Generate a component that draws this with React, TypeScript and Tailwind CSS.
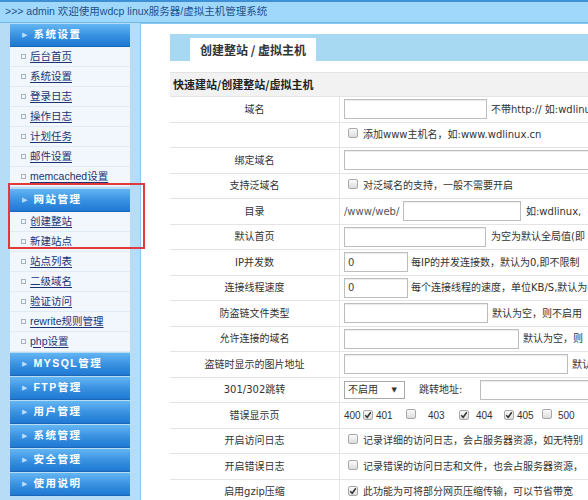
import React from "react";

const cjk = '"Noto Sans CJK SC", sans-serif';
const valFont = { fontFamily: `"DejaVu Sans", ${cjk}` };
const sideFont = { fontFamily: `"Liberation Sans", ${cjk}` };

const Box = ({ checked }: { checked?: boolean }) => (
  <span className="inline-flex shrink-0 items-center justify-center w-[10px] h-[10px] border border-[#a9a9a9] rounded-[2px] bg-gradient-to-b from-[#fbfbfb] to-[#dcdcdc]">
    {checked && (
      <svg width="8" height="8" viewBox="0 0 8 8">
        <path d="M1.2 4.3 L3.2 6.3 L6.8 1.3" stroke="#333" strokeWidth="1.5" fill="none" />
      </svg>
    )}
  </span>
);

const Input = ({ w, v }: { w: string; v?: string }) => (
  <span className={`inline-flex shrink-0 items-center h-[20px] border border-[#bdbdbd] bg-white px-[3px] text-[10px] text-[#444] shadow-[inset_0_1px_1px_rgba(0,0,0,0.08)] ${w}`}>
    {v}
  </span>
);

const SideHead = ({ label }: { label: string }) => (
  <div className="h-[23px] flex items-center bg-gradient-to-b from-[#63b6f2] via-[#3a92e2] to-[#1f78d3] border-b border-[#1a66b8]">
    <span className="ml-[12px] mr-[6px] text-[7px] text-[#b8dcff]">▶</span>
    <span className="text-white font-bold text-[10.5px] tracking-[1.5px]" style={sideFont}>{label}</span>
  </div>
);

const SideItem = ({ label }: { label: string }) => (
  <div className="h-[20px] flex items-center border-b border-[#e1ebf5] bg-[#f1f7fd]">
    <span className="ml-[11px] mr-[4px] w-[5px] h-[5px] border border-[#a5b2c0]" />
    <a className="text-[10.5px] text-[#1b3372] underline underline-offset-2" style={sideFont}>{label}</a>
  </div>
);

const Check = ({ checked, text }: { checked?: boolean; text: string }) => (
  <>
    <span className="ml-[4px] mr-[5px]"><Box checked={checked} /></span>
    <span>{text}</span>
  </>
);

const Code = ({ n, cls }: { n: string; cls?: string }) => (
  <span className={`w-[17px] shrink-0 ${cls ?? ""}`} style={sideFont}>{n}</span>
);

const Row = ({ label, children }: { label: string; children?: React.ReactNode }) => (
  <div className="flex h-[25.5px] border-b border-[#e4e4e4]">
    <div className="w-[170px] shrink-0 flex items-center justify-center border-r border-[#e4e4e4] text-[10px] text-[#333]">{label}</div>
    <div className="flex items-center pl-[4px] text-[10px] text-[#333] whitespace-nowrap">{children}</div>
  </div>
);

export default function App() {
  return (
    <div className="w-[588px] h-[500px] overflow-hidden bg-[#b6dcf6]" style={valFont}>
      <div className="h-[23px] border-t-2 border-[#3f8fd4] border-b border-b-[#6db8e6] bg-[#a0d8fc] flex items-center pl-[5px] text-[10.5px] text-[#21508a]" style={sideFont}>
        &gt;&gt;&gt; admin 欢迎使用wdcp linux服务器/虚拟主机管理系统
      </div>
      <div className="flex h-[477px]">
        <div className="w-[140px] shrink-0 px-[10px] pt-[1px] relative">
          <SideHead label="系统设置" />
          {["后台首页", "系统设置", "登录日志", "操作日志", "计划任务", "邮件设置", "memcached设置"].map((t) => (
            <SideItem key={t} label={t} />
          ))}
          <div className="h-[2px]" />
          <SideHead label="网站管理" />
          {["创建整站", "新建站点", "站点列表", "二级域名", "验证访问", "rewrite规则管理", "php设置"].map((t) => (
            <SideItem key={t} label={t} />
          ))}
          <div className="flex flex-col gap-[1px] mt-[1px]">
            <SideHead label="MYSQL管理" />
            <SideHead label="FTP管理" />
            <SideHead label="用户管理" />
            <SideHead label="系统管理" />
            <SideHead label="安全管理" />
            <SideHead label="使用说明" />
          </div>
          <div className="absolute left-[8px] top-[160px] w-[137px] h-[66px] border-2 border-[#e23a3a]" />
        </div>
        <div className="flex-1 bg-white border-l border-t border-[#8cc8ee] pl-[29px] pt-[10px] overflow-hidden">
          <div className="h-[27px] bg-[#a8d9f3] flex items-end pl-[20px]">
            <div className="h-[23px] w-[126px] bg-white flex items-center justify-center text-[12px] font-bold text-[#333]" style={{ fontFamily: cjk }}>
              创建整站 / 虚拟主机
            </div>
          </div>
          <div className="mt-[11px] border-t border-[#e4e4e4] w-[600px]">
            <div className="h-[24px] bg-[#f2f2f2] border-b border-[#e4e4e4] flex items-center pl-[3px] text-[11px] font-bold text-[#222]" style={{ fontFamily: cjk }}>
              快速建站/创建整站/虚拟主机
            </div>
            <Row label="域名">
              <Input w="w-[143px]" />
              <span className="ml-[4px]">不带http:// 如:wdlinux.cn</span>
            </Row>
            <Row label="">
              <Check text="添加www主机名，如:www.wdlinux.cn" />
            </Row>
            <Row label="绑定域名">
              <Input w="w-[260px]" />
            </Row>
            <Row label="支持泛域名">
              <Check text="对泛域名的支持，一般不需要开启" />
            </Row>
            <Row label="目录">
              <span className="text-[#555] w-[58px] shrink-0">/www/web/</span>
              <Input w="w-[118px] ml-[1px]" />
              <span className="ml-[5px]">如:wdlinux,</span>
            </Row>
            <Row label="默认首页">
              <Input w="w-[142px]" />
              <span className="ml-[5px]">为空为默认全局值(即</span>
            </Row>
            <Row label="IP并发数">
              <Input w="w-[64px]" v="0" />
              <span className="ml-[3px]">每IP的并发连接数，默认为0,即不限制</span>
            </Row>
            <Row label="连接线程速度">
              <Input w="w-[64px]" v="0" />
              <span className="ml-[3px]">每个连接线程的速度，单位KB/S,默认为0</span>
            </Row>
            <Row label="防盗链文件类型">
              <Input w="w-[144px]" />
              <span className="ml-[4px]">默认为空，则不启用</span>
            </Row>
            <Row label="允许连接的域名">
              <Input w="w-[175px]" />
              <span className="ml-[4px]">默认为空，则</span>
            </Row>
            <Row label="盗链时显示的图片地址">
              <Input w="w-[224px]" />
              <span className="ml-[4px]">默认</span>
            </Row>
            <Row label="301/302跳转">
              <span className="inline-flex items-center justify-between w-[61px] h-[18px] border border-[#a9a9a9] bg-white px-[3px] text-[10px]">
                不启用<span className="text-[7px] mr-[4px]">▼</span>
              </span>
              <span className="ml-[14px]">跳转地址:</span>
              <Input w="w-[120px] ml-[18px]" />
            </Row>
            <Row label="错误显示页">
              <Code n="400" />
              <span className="ml-[2px]"><Box checked /></span>
              <Code n="401" cls="ml-[3px]" />
              <span className="ml-[13px]"><Box /></span>
              <Code n="403" cls="ml-[12px]" />
              <span className="ml-[14px]"><Box checked /></span>
              <Code n="404" cls="ml-[7px]" />
              <span className="ml-[11px]"><Box checked /></span>
              <Code n="405" cls="ml-[3px]" />
              <span className="ml-[8px]"><Box /></span>
              <Code n="500" cls="ml-[6px]" />
            </Row>
            <Row label="开启访问日志">
              <Check text="记录详细的访问日志，会占服务器资源，如无特别" />
            </Row>
            <Row label="开启错误日志">
              <Check text="记录错误的访问日志和文件，也会占服务器资源，" />
            </Row>
            <Row label="启用gzip压缩">
              <Check checked text="此功能为可将部分网页压缩传输，可以节省带宽" />
            </Row>
          </div>
        </div>
      </div>
    </div>
  );
}
